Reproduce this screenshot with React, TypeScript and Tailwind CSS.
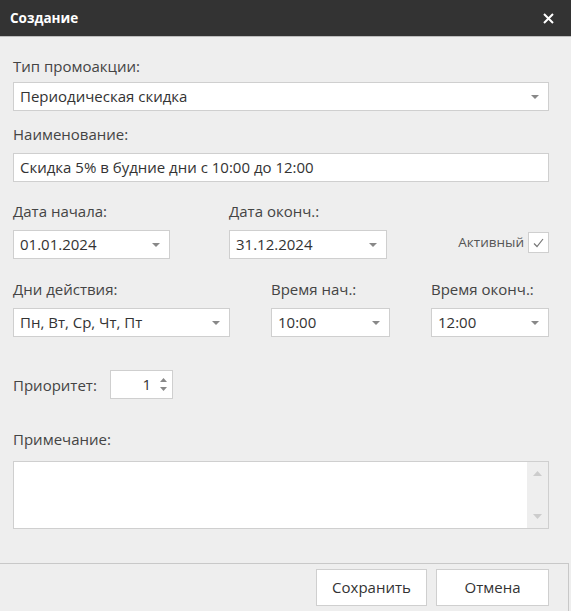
import React from 'react';

const Caret = () => (
  <svg width="8" height="4" viewBox="0 0 8 4" className="shrink-0">
    <path d="M0 0h8L4 4z" fill="#888" />
  </svg>
);

const Select = ({ value, className }: { value: string; className: string }) => (
  <div className={`h-[29px] bg-white border border-[#cfcfcf] flex items-center justify-between pl-[6px] pr-[9px] ${className}`}>
    <span>{value}</span>
    <Caret />
  </div>
);

const Label = ({ children, className = '' }: { children: React.ReactNode; className?: string }) => (
  <div className={`text-[15px] leading-[20px] text-[#444] ${className}`}>{children}</div>
);

export default function App() {
  return (
    <div
      className="w-[571px] h-[611px] bg-[#eeeeee] text-[15px] text-[#333] overflow-hidden flex flex-col"
      style={{ fontFamily: '"Open Sans", "Noto Sans", sans-serif' }}
    >
      {/* Header */}
      <div className="h-[37px] bg-[#333333] border-b border-[#bdbdbd] flex items-center justify-between pl-[10px] pr-[17px] shrink-0">
        <span className="text-white text-[13.5px] font-bold">Создание</span>
        <svg width="11" height="11" viewBox="0 0 11 11">
          <path d="M1 1l9 9M10 1l-9 9" stroke="#fff" strokeWidth="2" />
        </svg>
      </div>

      {/* Body */}
      <div className="flex-1 px-[13px] pr-[22px] pt-[19px]">
        <Label>Тип промоакции:</Label>
        <Select value="Периодическая скидка" className="mt-[6px]" />

        <Label className="mt-[13px]">Наименование:</Label>
        <div className="mt-[9px] h-[29px] bg-white border border-[#cfcfcf] flex items-center pl-[6px]">
          Скидка 5% в будние дни с 10:00 до 12:00
        </div>

        <div className="mt-[19px] flex items-start">
          <div className="w-[157px]">
            <Label>Дата начала:</Label>
            <Select value="01.01.2024" className="mt-[9px]" />
          </div>
          <div className="w-[158px] ml-[59px]">
            <Label>Дата оконч.:</Label>
            <Select value="31.12.2024" className="mt-[9px]" />
          </div>
          <div className="ml-auto mt-[31px] flex items-center gap-[4px]">
            <span className="text-[13.5px] text-[#555]">Активный</span>
            <div className="w-[21px] h-[21px] bg-white border border-[#cfcfcf] flex items-center justify-center">
              <svg width="11" height="10" viewBox="0 0 11 10">
                <path d="M1 5.5l3 3L10 1" stroke="#777" strokeWidth="1.2" fill="none" />
              </svg>
            </div>
          </div>
        </div>

        <div className="mt-[20px] flex items-start">
          <div className="w-[217px]">
            <Label>Дни действия:</Label>
            <Select value="Пн, Вт, Ср, Чт, Пт" className="mt-[9px]" />
          </div>
          <div className="w-[119px] ml-[41px]">
            <Label>Время нач.:</Label>
            <Select value="10:00" className="mt-[9px]" />
          </div>
          <div className="w-[118px] ml-[41px]">
            <Label>Время оконч.:</Label>
            <Select value="12:00" className="mt-[9px]" />
          </div>
        </div>

        <div className="mt-[33px] flex items-center">
          <Label className="w-[97px]">Приоритет:</Label>
          <div className="w-[63px] h-[29px] bg-white border border-[#cfcfcf] flex items-center justify-end pr-[5px]">
            <span className="mr-[9px]">1</span>
            <div className="flex flex-col gap-[5px]">
              <svg width="7" height="4" viewBox="0 0 7 4"><path d="M0 4h7L3.5 0z" fill="#888" /></svg>
              <svg width="7" height="4" viewBox="0 0 7 4"><path d="M0 0h7L3.5 4z" fill="#888" /></svg>
            </div>
          </div>
        </div>

        <Label className="mt-[30px]">Примечание:</Label>
        <div className="mt-[12px] h-[68px] bg-white border border-[#cfcfcf] flex justify-end">
          <div className="w-[21px] bg-[#eeeeee] flex flex-col items-center justify-between py-[9px]">
            <svg width="9" height="5" viewBox="0 0 9 5"><path d="M0 5h9L4.5 0z" fill="#ccc" /></svg>
            <svg width="9" height="5" viewBox="0 0 9 5"><path d="M0 0h9L4.5 5z" fill="#ccc" /></svg>
          </div>
        </div>
      </div>

      {/* Footer */}
      <div className="h-[48px] border-t border-[#c8c8c8] border-r mr-[2px] flex items-start justify-end gap-[9px] pt-[5px] pr-[19px] shrink-0">
        <button className="w-[111px] h-[37px] bg-white border border-[#cfcfcf] text-[#333]">Сохранить</button>
        <button className="w-[113px] h-[37px] bg-white border border-[#cfcfcf] text-[#333]">Отмена</button>
      </div>
    </div>
  );
}
